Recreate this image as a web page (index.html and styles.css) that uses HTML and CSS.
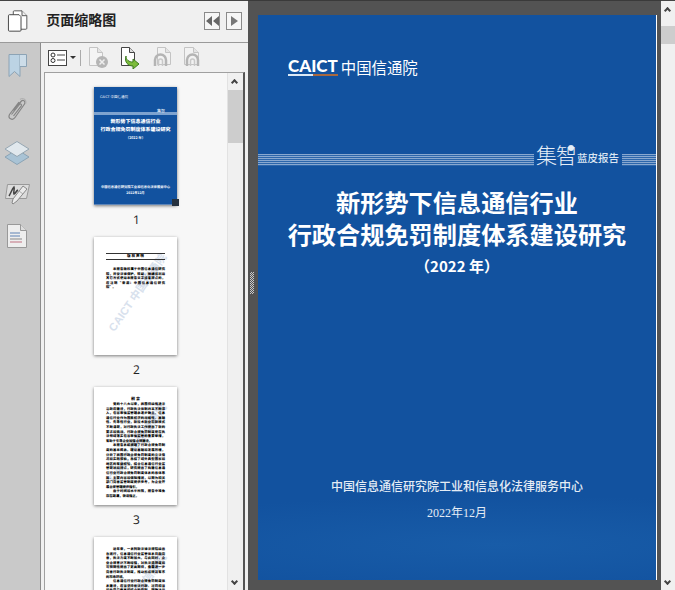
FILE: index.html
```html
<!DOCTYPE html>
<html lang="zh-CN">
<head>
<meta charset="UTF-8">
<meta name="viewport" content="width=device-width, initial-scale=1.0">
<title>页面缩略图</title>
<link rel="stylesheet" href="styles.css">
</head>
<body>

<div class="sidebar">
  <div class="panel-head">
    <svg class="pages-icon" width="22" height="24" viewBox="0 0 22 24">
      <path d="M7.500 1.500h8l5 5v13q0 1-1 1H7.500q-1 0-1-1v-17q0-1 1-1z" fill="#fff" stroke="#555"/>
      <path d="M15.500 1.500v5h5" fill="#eee" stroke="#555"/>
      <path d="M2.500 5.500h10l2 2v14q0 1-1 1h-11q-1 0-1-1v-15q0-1 1-1z" fill="#fff" stroke="#444"/>
    </svg>
    <div class="panel-title">页面缩略图</div>
    <div class="nav-btn nav-btn-wide">
      <svg width="13" height="10" viewBox="0 0 13 10"><path d="M6 0v10L0 5zM13 0v10L7 5z" fill="#666"/></svg>
    </div>
    <div class="nav-btn">
      <svg width="7" height="10" viewBox="0 0 7 10"><path d="M0 0v10l7-5z" fill="#777"/></svg>
    </div>
  </div>

  <div class="panel-body">
    <div class="rail">
      <svg width="19" height="25" viewBox="0 0 19 25">
        <path d="M1 1.500h11v22l-5.500-5-5.500 5z" fill="#bcd3e4" stroke="#8ca3b5"/>
        <path d="M12 1.500h6.500v12H12" fill="#cddde9" stroke="#8ca3b5"/>
      </svg>
      <svg width="20" height="25" viewBox="0 0 20 25" fill="none" stroke="#858585" stroke-width="1.200">
        <path d="M6.500 13.500L14 4.500c2-2.500 5-.5 3.500 2.500L8 20.500c-2.500 3.500-7.500 1-5.500-3L12 5"/>
        <path d="M4.500 17.500L12.500 7.500c1-1.200 2.500 0 1.800 1.300L6.500 19"/>
        <path d="M13 2.500c3-2.500 7 .5 5.500 4.500" stroke="#b0b0b0"/>
      </svg>
      <svg width="26" height="24" viewBox="0 0 26 24">
        <path d="M13 8.500L25 16 13 23.500 1 16z" fill="#a9c3d5" stroke="#8ba3b4"/>
        <path d="M13 .5L25 8 13 15.500 1 8z" fill="#e1e8ed" stroke="#95a6b2"/>
      </svg>
      <svg width="25" height="21" viewBox="0 0 25 21">
        <path d="M2.500 .5h22l-3 14H.5z" fill="#dcdcdc" stroke="#999"/>
        <path d="M4 12c2-3 3-7 5-9 1 2-1 5 0 7 2-1 2-3 4-4" fill="none" stroke="#444" stroke-width="1.500"/>
        <path d="M18 2l4 3L12 17l-4 3-1-1 1-4z" fill="#eaeaea" stroke="#888"/>
        <path d="M14 7l4 3" stroke="#aaa"/>
      </svg>
      <svg width="20" height="24" viewBox="0 0 20 24">
        <path d="M.5.500h13l6 6v17H.500z" fill="#eee" stroke="#999"/>
        <path d="M13.500.5v6h6" fill="#ddd" stroke="#999"/>
        <path d="M3 9h10M3 12h10" stroke="#8fa7c7" stroke-width="1.500"/>
        <path d="M3 15h12" stroke="#aaa" stroke-width="1.500"/>
        <path d="M3 18h12" stroke="#cf9aa5" stroke-width="1.500"/>
      </svg>
    </div>

    <div class="thumb-pane">
      <div class="toolbar">
        <svg class="tool-options" width="19" height="16" viewBox="0 0 19 16">
          <rect x=".5" y=".5" width="18" height="15" fill="#fff" stroke="#444"/>
          <path d="M9 5h8M9 10h8" stroke="#444"/>
          <circle cx="5" cy="5" r="2" fill="#fff" stroke="#333"/>
          <circle cx="5" cy="10.500" r="2" fill="#fff" stroke="#333"/>
        </svg>
        <div class="caret"></div>
        <div class="tool-sep"></div>
        <svg width="20" height="22" viewBox="0 0 20 22">
          <path d="M.5.500h8l5 5v13H.500z" fill="#f4f4f4" stroke="#c4c4c4"/>
          <path d="M8.500 .5v5h5" fill="#e4e4e4" stroke="#c4c4c4"/>
          <circle cx="13" cy="15" r="6" fill="#b5b5b5"/>
          <path d="M10.500 12.500l5 5m0-5l-5 5" stroke="#eee" stroke-width="1.500"/>
        </svg>
        <svg width="20" height="22" viewBox="0 0 20 22">
          <path d="M.5.500h8l5 5v13H.500z" fill="#fff" stroke="#444"/>
          <path d="M8.500 .5v5h5" fill="#ddd" stroke="#444"/>
          <path d="M5 9c0 4 3 6 7 6v-3l6 5-6 5v-3c-5 0-9-4-7-10z" fill="#7cbb3c" stroke="#3f7d22"/>
        </svg>
        <svg width="18" height="21" viewBox="0 0 18 21">
          <path d="M4.500 .5h8l5 5v12H4.500z" fill="#f2f2f2" stroke="#c4c4c4"/>
          <path d="M12.500 .5v5h5" fill="#e4e4e4" stroke="#c4c4c4"/>
          <path d="M2 19v-6a5.500 5.500 0 0 1 11 0v6" fill="none" stroke="#b4b4b4" stroke-width="2.500"/>
          <path d="M5.500 19v-5a2 2 0 0 1 4 0v5" fill="none" stroke="#c8c8c8" stroke-width="1.500"/>
        </svg>
        <svg width="18" height="21" viewBox="0 0 18 21">
          <path d="M1.500 .5h9l5 5v12h-14z" fill="#f2f2f2" stroke="#c4c4c4"/>
          <path d="M10.500 .5v5h5" fill="#e4e4e4" stroke="#c4c4c4"/>
          <path d="M4 19v-6a5.500 5.500 0 0 1 11 0v6" fill="none" stroke="#b4b4b4" stroke-width="2.500"/>
          <path d="M7.500 19v-5a2 2 0 0 1 4 0v5" fill="none" stroke="#c8c8c8" stroke-width="1.500"/>
        </svg>
      </div>

      <div class="thumb-box">
        <div class="thumb-list">

          <div class="thumb">
            <div class="thumb-page thumb-cover">
              <div class="mini-logo">CAICT 中国信通院</div>
              <div class="mini-band"><span>集智</span></div>
              <div class="mini-title">新形势下信息通信行业<br>行政合规免罚制度体系建设研究</div>
              <div class="mini-year">（2022 年）</div>
              <div class="mini-org">中国信息通信研究院工业和信息化法律服务中心</div>
              <div class="mini-date">2022年12月</div>
              <div class="thumb-handle"></div>
            </div>
            <div class="thumb-num">1</div>
          </div>

          <div class="thumb">
            <div class="thumb-page thumb-text">
              <div class="mark">CAICT 中国信通院</div>
              <div class="mini-rule-title">版 权 声 明</div>
              <p class="mini-body">本报告版权属于中国信息通信研究院，并受法律保护。转载、摘编或利用其它方式使用本报告文字或者观点的，应注明“来源：中国信息通信研究院”。</p>
            </div>
            <div class="thumb-num">2</div>
          </div>

          <div class="thumb">
            <div class="thumb-page thumb-text">
              <div class="mark">CAICT 中国信通院</div>
              <div class="mini-head">前 言</div>
              <p class="mini-body dense">党的十八大以来，我国持续推进法治政府建设，行政执法体制改革不断深入，包容审慎监管理念逐步确立。信息通信行业作为国民经济的战略性、基础性、先导性行业，新技术新业态新模式不断涌现，对行政执法工作提出了新的要求和挑战。行政合规免罚制度是在执法领域落实包容审慎监管的重要举措，有助于引导企业加强合规建设。</p>
              <p class="mini-body dense">本报告系统梳理了行政合规免罚制度的基本概念、理论基础和发展历程，分析了我国行政合规免罚制度的立法情况和实践探索，总结了域外典型国家和地区的有益经验，结合信息通信行业监管现状和特点，研究提出了构建信息通信行业行政合规免罚制度体系的总体思路、主要内容和保障措施，以期为相关部门完善监管制度提供参考，为企业开展合规管理提供指引。</p>
              <p class="mini-body dense">由于时间和水平所限，报告中难免存在疏漏，敬请指正。</p>
            </div>
            <div class="thumb-num">3</div>
          </div>

          <div class="thumb">
            <div class="thumb-page thumb-text">
              <div class="mark">CAICT 中国信通院</div>
              <p class="mini-body dense">近年来，一系列新法律法规陆续出台施行，信息通信行业监管体系日趋完善，执法力度不断加大。与此同时，企业合规意识不断增强，对执法透明度和可预期性提出了更高期待，亟需进一步完善行政执法制度，推动形成规范有序的市场环境。</p>
              <p class="mini-body dense">信息通信行业行政合规免罚制度体系建设，应当坚持依法行政、过罚相当和处罚与教育相结合的原则，明确适用条件和操作程序，切实提升行业治理效能。</p>
            </div>
          </div>

        </div>
        <div class="scrollbar thumb-scroll">
          <div class="arrow-up"></div>
          <div class="scroll-thumb"></div>
          <div class="arrow-down"></div>
        </div>
      </div>
    </div>
  </div>
</div>

<div class="viewer">
  <div class="grip"></div>
  <div class="doc-page">
    <div class="doc-logo">
      <div class="caict">CAICT</div>
      <div class="caict-cn">中国信通院</div>
    </div>
    <div class="doc-band">
      <div class="band-lines"></div>
      <div class="band-brand">集智</div>
      <div class="band-label">蓝皮报告</div>
      <div class="band-lines band-short"></div>
    </div>
    <h1 class="doc-title">新形势下信息通信行业<br>行政合规免罚制度体系建设研究</h1>
    <div class="doc-year">（2022 年）</div>
    <div class="doc-org">中国信息通信研究院工业和信息化法律服务中心</div>
    <div class="doc-date">2022年12月</div>
  </div>
</div>

<div class="scrollbar main-scroll">
  <div class="arrow-up"></div>
  <div class="scroll-thumb"></div>
  <div class="arrow-down"></div>
</div>

</body>
</html>
```

FILE: styles.css
```css
body {
  margin: 0;
  height: 590px;
  display: flex;
  overflow: hidden;
  font-family: "Noto Sans CJK SC", "Liberation Sans", sans-serif;
  background-color: #f0f0f0;
}

/* left panel */
.sidebar {
  width: 248px;
  flex: none;
  display: flex;
  flex-direction: column;
  border-top: 1px solid #444;
  box-sizing: border-box;
}

.panel-head {
  height: 42px;
  flex: none;
  display: flex;
  align-items: center;
  box-sizing: border-box;
  padding: 0 0 2px 7px;
  background-color: #f0f0f0;
  border-bottom: 1px solid #9a9a9a;
}

.pages-icon {
  margin-right: 18px;
}

.panel-title {
  font-size: 14px;
  font-weight: 700;
  color: #222;
  width: 163px;
  margin-bottom: 4px;
}

.nav-btn {
  width: 14px;
  height: 16px;
  margin-right: 6px;
  display: flex;
  align-items: center;
  justify-content: center;
  border: 1px solid #8a8a8a;
  background-color: #f6f6f6;
}

.nav-btn-wide {
  width: 15px;
}

.panel-body {
  flex: 1;
  display: flex;
  min-height: 0;
}

.rail {
  width: 41px;
  flex: none;
  box-sizing: border-box;
  display: flex;
  flex-direction: column;
  align-items: center;
  padding: 10px 6px 0 0;
  gap: 19px;
  background-color: #c9c9c9;
  border-right: 1px solid #8c8c8c;
}

.thumb-pane {
  flex: 1;
  min-width: 0;
  display: flex;
  flex-direction: column;
}

.toolbar {
  height: 29px;
  flex: none;
  display: flex;
  align-items: center;
  padding-left: 7px;
}

.caret {
  width: 0;
  height: 0;
  margin-left: 3px;
  border-left: 3px solid transparent;
  border-right: 3px solid transparent;
  border-top: 3px solid #333;
}

.tool-sep {
  width: 1px;
  height: 16px;
  margin: 0 8px 0 4px;
  background-color: #aaa;
}

.toolbar svg + svg {
  margin-left: 12px;
}

.thumb-box {
  flex: 1;
  min-height: 0;
  margin: 0 3px 0 3px;
  display: flex;
  border-top: 1px solid #a0a0a0;
  border-left: 1px solid #a0a0a0;
  border-right: 2px solid #555;
  overflow: hidden;
}

.thumb-list {
  flex: 1;
  min-width: 0;
  padding: 14px 48px 0 49px;
  background-color: #f7f7f7;
  text-rendering: geometricPrecision;
}

.thumb {
  height: 150px;
}

.thumb-page {
  position: relative;
  width: 83px;
  height: 118px;
  box-sizing: border-box;
  background-color: #fff;
  box-shadow: 0 1px 3px rgba(0,0,0,.5);
}

.thumb-num {
  margin-top: 7px;
  text-align: center;
  font-family: "Open Sans", sans-serif;
  font-size: 12px;
  line-height: 16px;
  color: #222;
}

.thumb-handle {
  position: absolute;
  right: -2px;
  bottom: -2px;
  width: 7px;
  height: 7px;
  background-color: #26323f;
}

/* small cover */
.thumb-cover {
  background-color: #12529f;
  color: #fff;
  text-align: center;
  padding-top: 8px;
  border-bottom: 1px solid #5f86b8;
}

.mini-logo {
  font-size: 3.500px;
  line-height: 5px;
  text-align: left;
  padding-left: 6px;
}

.mini-band {
  height: 3px;
  margin-top: 12px;
  background-color: #7ea3cf;
  position: relative;
}

.mini-band span {
  position: absolute;
  right: 12px;
  top: -3px;
  font-size: 4px;
  line-height: 5px;
}

.mini-title {
  margin-top: 3px;
  font-size: 5px;
  font-weight: 900;
  line-height: 8px;
  white-space: nowrap;
}

.mini-year {
  margin-top: 2px;
  font-size: 3.500px;
  font-weight: 700;
  line-height: 6px;
}

.mini-org {
  margin-top: 42px;
  font-size: 3.300px;
  font-weight: 700;
  line-height: 6px;
  white-space: nowrap;
}

.mini-date {
  font-size: 3.300px;
  font-weight: 700;
  line-height: 5px;
}

/* small text pages */
.thumb-text {
  padding: 10px 12px 0 12px;
  color: #000;
}

.mark {
  position: absolute;
  left: 0;
  top: 52px;
  width: 84px;
  text-align: center;
  font-family: "Liberation Sans", "Noto Sans CJK SC", sans-serif;
  font-size: 11px;
  line-height: 14px;
  font-weight: 700;
  white-space: nowrap;
  color: #d8e1ed;
  transform: rotate(-55deg);
}

.mini-rule-title {
  position: relative;
  margin-top: 6px;
  border-top: 1px solid #333;
  border-bottom: 1px solid #333;
  font-size: 3.600px;
  font-weight: 900;
  line-height: 5px;
  text-align: center;
}

.mini-head {
  position: relative;
  font-size: 4px;
  font-weight: 900;
  line-height: 5px;
  text-align: center;
}

.mini-body {
  position: relative;
  margin: 7px 0 0 0;
  font-size: 3.300px;
  line-height: 4.500px;
  font-weight: 900;
  text-align: justify;
  text-indent: 7px;
}

.mini-body.dense {
  margin-top: 0;
  line-height: 4.600px;
}

/* scrollbars */
.scrollbar {
  width: 15px;
  flex: none;
  position: relative;
  background-color: #f0f0f0;
}

.thumb-scroll {
  border-left: 1px solid #e2e2e2;
}

.main-scroll {
  width: 14px;
  border-top: 1px solid #444;
}

.arrow-up,
.arrow-down {
  position: absolute;
  left: 4px;
  width: 5px;
  height: 5px;
  border-left: 2px solid #444;
  border-top: 2px solid #444;
  box-sizing: border-box;
}

.arrow-up {
  top: 7px;
  transform: rotate(45deg);
}

.arrow-down {
  bottom: 6px;
  transform: rotate(225deg);
}

.scroll-thumb {
  position: absolute;
  left: 0;
  right: 0;
  top: 17px;
  height: 53px;
  background-color: #cdcdcd;
}

.main-scroll .scroll-thumb {
  top: 25px;
  height: 18px;
}

/* document view */
.viewer {
  flex: 1;
  min-width: 0;
  position: relative;
  box-sizing: border-box;
  padding: 15px 4px 10px 10px;
  background-color: #535353;
  border-top: 1px solid #3a3a3a;
}

.grip {
  position: absolute;
  left: 2px;
  top: 271px;
  width: 4px;
  height: 22px;
  background-image: repeating-conic-gradient(#c8c8c8 0 25%, transparent 0 50%);
  background-size: 2px 2px;
}

.doc-page {
  height: 565px;
  margin-top: -1px;
  display: flex;
  flex-direction: column;
  align-items: center;
  box-sizing: border-box;
  color: #fff;
  border-right: 1px solid #fff;
  background-color: #12529f;
  background-image: radial-gradient(ellipse 420px 50px at 60% 530px, #185ca8, transparent);
}

.doc-logo {
  align-self: flex-start;
  display: flex;
  align-items: center;
  margin: 42px 0 0 30px;
}

.caict {
  font-family: "Lato", "Liberation Sans", sans-serif;
  font-size: 17px;
  font-weight: 900;
  line-height: 15px;
  padding-bottom: 1px;
  border-bottom: 2px solid;
  border-image: linear-gradient(90deg, #dce9f5 50%, #a8683f 50%) 1;
}

.caict-cn {
  margin-left: 3px;
  font-size: 15.400px;
  line-height: 20px;
}

.doc-band {
  align-self: stretch;
  display: flex;
  align-items: center;
  height: 34px;
  margin-top: 66px;
}

.band-lines {
  flex: 1;
  height: 12px;
  background-image: repeating-linear-gradient(180deg, #88a8d0 0, #88a8d0 1px, #2c66ab 1px, #2c66ab 2px);
}

.band-short {
  flex: none;
  width: 34px;
}

.band-brand {
  position: relative;
  margin: 0 0 12px 2px;
  font-size: 21px;
  font-weight: 300;
  line-height: 24px;
  color: #e6eef7;
  letter-spacing: -1px;
}

.band-brand::after {
  content: "";
  position: absolute;
  right: 2px;
  top: 3px;
  width: 6px;
  height: 6px;
  border-radius: 50%;
  background-color: #e6eef7;
}

.band-label {
  margin: -4px 3px 0 1px;
  font-size: 10.500px;
  font-weight: 500;
  line-height: 14px;
  color: #dbe6f2;
}

.doc-title {
  margin: 9px 0 0 0;
  font-size: 24.200px;
  font-weight: 700;
  line-height: 32px;
  text-align: center;
  white-space: nowrap;
}

.doc-year {
  margin-top: 5px;
  font-size: 15px;
  font-weight: 700;
  line-height: 22px;
}

.doc-org {
  margin-top: 200px;
  font-size: 12px;
  font-weight: 500;
  line-height: 18px;
  color: #e4ecf5;
}

.doc-date {
  margin-top: 9px;
  font-family: "Liberation Serif", "Noto Sans CJK SC", serif;
  font-size: 12px;
  line-height: 18px;
  color: #e4ecf5;
}
```
